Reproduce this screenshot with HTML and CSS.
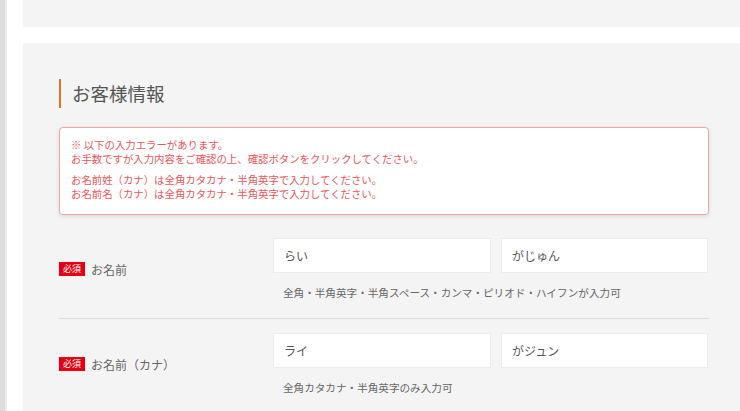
FILE: index.html
```html
<!DOCTYPE html>
<html lang="ja">
<head>
<meta charset="utf-8">
<title>お客様情報</title>
<link rel="stylesheet" href="styles.css">
</head>
<body>
<div class="page">
  <div class="sidebar"></div>
  <main class="main">
    <section class="card card-top"></section>
    <section class="card card-form">
      <h2 class="heading">お客様情報</h2>
      <div class="error-box">
        <p class="error-group">※ 以下の入力エラーがあります。<br>お手数ですが入力内容をご確認の上、確認ボタンをクリックしてください。</p>
        <p class="error-group">お名前姓（カナ）は全角カタカナ・半角英字で入力してください。<br>お名前名（カナ）は全角カタカナ・半角英字で入力してください。</p>
      </div>
      <div class="row row-first">
        <div class="label"><span class="badge">必須</span><span class="label-text">お名前</span></div>
        <div class="field">
          <div class="inputs">
            <div class="input">らい</div>
            <div class="input">がじゅん</div>
          </div>
          <p class="hint">全角・半角英字・半角スペース・カンマ・ピリオド・ハイフンが入力可</p>
        </div>
      </div>
      <div class="row">
        <div class="label"><span class="badge">必須</span><span class="label-text">お名前（カナ）</span></div>
        <div class="field">
          <div class="inputs">
            <div class="input">ライ</div>
            <div class="input">がジュン</div>
          </div>
          <p class="hint">全角カタカナ・半角英字のみ入力可</p>
        </div>
      </div>
    </section>
  </main>
</div>
</body>
</html>
```

FILE: styles.css
```css
html, body {
  margin: 0;
  padding: 0;
  background: #fff;
  height: 100%;
  overflow: hidden;
}
body {
  font-family: "Noto Sans CJK JP", "Noto Sans", sans-serif;
  color: #555;
}
.page {
  display: flex;
  min-height: 411px;
}
.sidebar {
  width: 5px;
  background: #dcdcdc;
  border-right: 2px solid #ececec;
  flex: none;
}
.main {
  flex: 1;
  padding-left: 16px;
  display: flex;
  flex-direction: column;
  gap: 16px;
}
.card {
  background: #f4f4f4;
}
.card-top {
  height: 27px;
}
.card-form {
  flex: 1;
  padding: 36px 31px 0 36px;
}
.heading {
  margin: 0;
  height: 29px;
  border-left: 2px solid #e8731e;
  padding-left: 11px;
  font-size: 18.5px;
  font-weight: normal;
  line-height: 29px;
  color: #555;
}
.error-box {
  margin-top: 19px;
  background: #fff;
  border: 1px solid #eaa8a8;
  border-radius: 4px;
  box-shadow: 0 1px 4px rgba(0, 0, 0, 0.12);
  padding: 10px 11px 13px;
  color: #e8585c;
  font-size: 10.4px;
  line-height: 14px;
}
.error-group {
  margin: 0;
}
.error-group + .error-group {
  margin-top: 7px;
}
.row {
  display: flex;
  align-items: center;
  padding: 14px 0 18px;
}
.row-first {
  padding-top: 23px;
  border-bottom: 1px solid #dcdcdc;
}
.label {
  width: 214px;
  flex: none;
  display: flex;
  align-items: center;
  gap: 6px;
}
.badge {
  background: #e60012;
  color: #fff;
  font-size: 9px;
  line-height: 14px;
  width: 26px;
  text-align: center;
}
.label-text {
  font-size: 12px;
  color: #666;
}
.field {
  flex: 1;
}
.inputs {
  display: grid;
  grid-template-columns: 218px 207px;
  gap: 10px;
}
.input {
  height: 35px;
  box-sizing: border-box;
  background: #fff;
  border: 1px solid #ececec;
  padding: 0 10px;
  font-size: 12px;
  line-height: 33px;
  color: #555;
}
.hint {
  margin: 13px 0 0;
  padding-left: 10px;
  font-size: 10.6px;
  line-height: 14px;
  color: #666;
}
```
